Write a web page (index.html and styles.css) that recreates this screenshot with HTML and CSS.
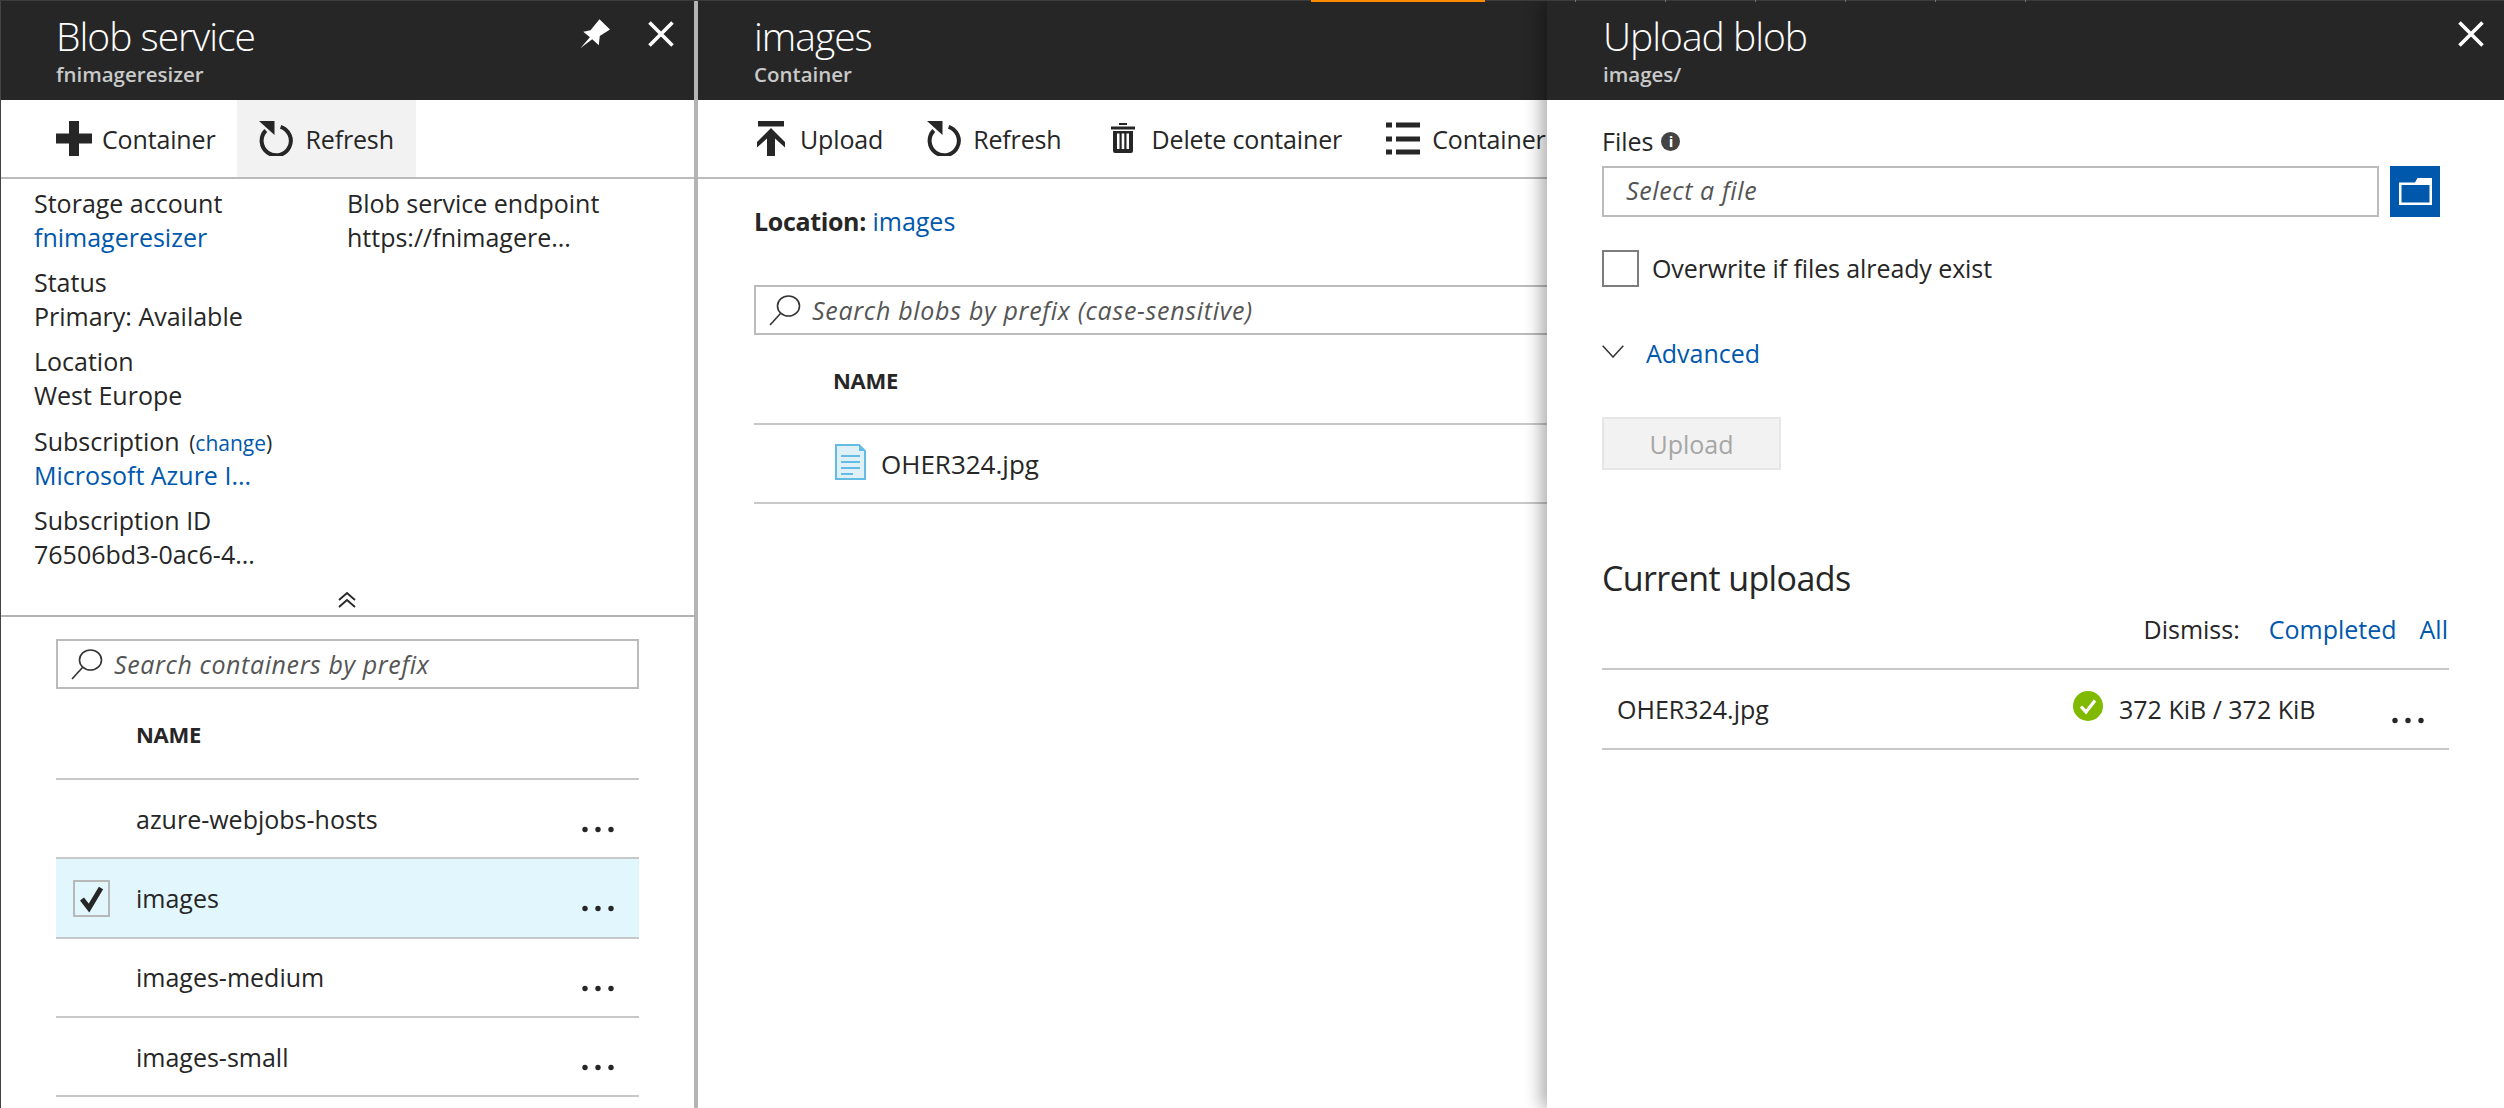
FILE: index.html
```html
<!DOCTYPE html>
<html lang="en">
<head>
<meta charset="utf-8">
<title>Upload blob</title>
<link rel="stylesheet" href="styles.css">
</head>
<body>
<svg class="defs" width="0" height="0">
  <defs>
    <symbol id="refresh" viewBox="0 0 34 35"><path d="M21.6 5.8A14.6 14.6 0 1 1 6.8 9.5" fill="none" stroke="#262626" stroke-width="4"/><path d="M0 0H15.5V14Z" fill="#262626"/></symbol>
    <symbol id="search" viewBox="0 0 32 31"><ellipse cx="19.5" cy="11" rx="11" ry="10" fill="none" stroke="#333" stroke-width="1.6"/><path d="M11.5 18.5L1 30" stroke="#333" stroke-width="1.6" fill="none"/></symbol>
    <symbol id="dots" viewBox="0 0 32 7"><circle cx="3" cy="3.5" r="2.7" fill="#262626"/><circle cx="16" cy="3.5" r="2.7" fill="#262626"/><circle cx="29" cy="3.5" r="2.7" fill="#262626"/></symbol>
  </defs>
</svg>
<div class="topline"><span class="orange"></span><span class="ticks"><i></i><i></i><i></i><i></i><i></i><i></i></span></div>
<main class="desk">

  <section class="blade blade-service">
    <header class="head">
      <div class="head-text">
        <h1>Blob service</h1>
        <p>fnimageresizer</p>
      </div>
      <svg class="pin" viewBox="90 27 91 90"><path d="M91 115L120 82L100 65L122 61L149 27L181 58L150 78L147 106L127 88Z" fill="#fff"/></svg>
      <svg class="close" viewBox="0 0 26 26"><path d="M1.5 1.5L24.5 24.5M24.5 1.5L1.5 24.5" stroke="#fff" stroke-width="3.6" fill="none"/></svg>
    </header>
    <nav class="toolbar toolbar-service">
      <a class="tool tool-first"><svg class="ico-plus" viewBox="0 0 36 35"><path d="M13 0H23V12.5H36V22.5H23V35H13V22.5H0V12.5H13Z" fill="#262626"/></svg>Container</a>
      <a class="tool tool-hover"><svg class="ico-refresh"><use href="#refresh"/></svg>Refresh</a>
    </nav>
    <div class="essentials">
      <div class="ess-col">
        <div class="ess-item"><div>Storage account</div><a class="link">fnimageresizer</a></div>
        <div class="ess-item"><div>Status</div><div>Primary: Available</div></div>
        <div class="ess-item"><div>Location</div><div>West Europe</div></div>
        <div class="ess-item"><div>Subscription <span class="change">(<a class="link">change</a>)</span></div><a class="link">Microsoft Azure I...</a></div>
        <div class="ess-item"><div>Subscription ID</div><div>76506bd3-0ac6-4...</div></div>
      </div>
      <div class="ess-col">
        <div class="ess-item"><div>Blob service endpoint</div><div>https://fnimagere...</div></div>
      </div>
      <svg class="collapse" viewBox="0 0 18 16"><path d="M1 8L9 1L17 8M1 15L9 8L17 15" fill="none" stroke="#262626" stroke-width="1.8"/></svg>
    </div>
    <div class="list-area">
      <div class="searchbox"><svg class="ico-search"><use href="#search"/></svg><span>Search containers by prefix</span></div>
      <div class="col-head">NAME</div>
      <div class="row"><span class="name">azure-webjobs-hosts</span><svg class="dots"><use href="#dots"/></svg></div>
      <div class="row row-selected">
        <span class="check"><svg viewBox="0 0 26 28"><path d="M3 14L10 23L22 3" fill="none" stroke="#262626" stroke-width="5"/></svg></span>
        <span class="name">images</span><svg class="dots"><use href="#dots"/></svg>
      </div>
      <div class="row"><span class="name">images-medium</span><svg class="dots"><use href="#dots"/></svg></div>
      <div class="row"><span class="name">images-small</span><svg class="dots"><use href="#dots"/></svg></div>
    </div>
  </section>

  <section class="blade blade-container">
    <header class="head">
      <div class="head-text">
        <h1>images</h1>
        <p>Container</p>
      </div>
    </header>
    <nav class="toolbar toolbar-container">
      <a class="tool"><svg class="ico-upload" viewBox="0 0 28 35"><path d="M1 0H27V5.5H1ZM14 7L28 21V26.500L18 17.500V35H10V17.500L0 26.500V21Z" fill="#262626"/></svg>Upload</a>
      <a class="tool"><svg class="ico-refresh"><use href="#refresh"/></svg>Refresh</a>
      <a class="tool"><svg class="ico-trash" viewBox="-5 0 34 31"><path d="M8 0H16V2H8ZM0 3.500H24V6.500H0ZM2 8H22V28A2 2 0 0 1 20 30H4A2 2 0 0 1 2 28ZM6 10.500V26H8.500V10.500ZM10.700 10.500V26H13.300V10.500ZM15.500 10.500V26H18V10.500Z" fill-rule="evenodd" fill="#262626"/></svg>Delete container</a>
      <a class="tool"><svg class="ico-list" viewBox="0 0 34 33"><path d="M0 3H6M10 3H34M0 17H6M10 17H34M0 30H6M10 30H34" stroke="#262626" stroke-width="5" fill="none"/></svg>Container</a>
    </nav>
    <div class="container-body">
      <p class="location"><b>Location:</b> <a class="link">images</a></p>
      <div class="searchbox searchbox-wide"><svg class="ico-search"><use href="#search"/></svg><span>Search blobs by prefix (case-sensitive)</span></div>
      <div class="col-head col-head-blob">NAME</div>
      <div class="row row-blob">
        <svg class="ico-file" viewBox="0 0 31 36"><path d="M1 1H24L30 7V35H1Z" fill="#dff0f9" stroke="#62bce3" stroke-width="2"/><path d="M24 1V7H30Z" fill="#62bce3"/><path d="M6 12H25M6 18H25M6 24H25M6 30H18" stroke="#62bce3" stroke-width="2"/></svg>
        <span class="name">OHER324.jpg</span>
      </div>
    </div>
  </section>

  <section class="blade blade-upload">
    <header class="head">
      <div class="head-text">
        <h1>Upload blob</h1>
        <p>images/</p>
      </div>
      <svg class="close" viewBox="0 0 26 26"><path d="M1.500 1.500L24.500 24.500M24.500 1.500L1.500 24.500" stroke="#fff" stroke-width="3.600" fill="none"/></svg>
    </header>
    <div class="upload-body">
      <div class="files-label">Files <span class="info">i</span></div>
      <div class="file-row">
        <div class="file-input">Select a file</div>
        <div class="file-btn"><svg viewBox="0 0 33 27"><path d="M0 4.500H16L18.500 0H33V27H0ZM2.500 7V24.500H30.500V7Z" fill="#fff" fill-rule="evenodd"/></svg></div>
      </div>
      <label class="overwrite"><span class="box"></span><span class="overwrite-text">Overwrite if files already exist</span></label>
      <div class="advanced"><svg viewBox="0 0 22 13"><path d="M.7.7L11 12L21.300.7" fill="none" stroke="#333" stroke-width="1.500"/></svg><a class="link">Advanced</a></div>
      <div class="upload-btn">Upload</div>
      <h2>Current uploads</h2>
      <div class="dismiss"><span>Dismiss:</span><a class="link">Completed</a><a class="link">All</a></div>
      <div class="upload-row">
        <span class="up-name">OHER324.jpg</span>
        <svg class="ok" viewBox="0 0 30 30"><circle cx="15" cy="15" r="15" fill="#7fba00"/><path d="M8 15.500L13 21L22 9.500" fill="none" stroke="#fff" stroke-width="3.200"/></svg>
        <span class="up-size">372 KiB / 372 KiB</span>
        <svg class="dots"><use href="#dots"/></svg>
      </div>
    </div>
  </section>

</main>
</body>
</html>
```

FILE: styles.css
```css
* { box-sizing: border-box; }
html, body { margin: 0; height: 100%; }
body {
  width: 2504px;
  height: 1108px;
  overflow: hidden;
  position: relative;
  background: #fff;
  color: #262626;
  font-family: "Open Sans", "Noto Sans", sans-serif;
  font-size: 25px;
  letter-spacing: 0;
  line-height: 34px;
}
.defs { position: absolute; }
a { color: inherit; text-decoration: none; }
.link { color: #0058ad; }

.topline {
  position: absolute;
  z-index: 5;
  left: 0; top: 0;
  width: 100%;
  height: 1px;
  background: #3c3c3c;
}
.orange { position: absolute; left: 1311px; top: 0; width: 174px; height: 2px; background: #ff8c00; }
.ticks { position: absolute; left: 1575px; top: 0; display: flex; gap: 89px; }
.ticks i { width: 1px; height: 2px; background: #777; }

.desk { display: flex; height: 1108px; }
.blade { height: 100%; overflow: hidden; background: #fff; }
.blade-service { width: 698px; border-left: 1px solid #444; border-right: 4px solid #b4b4b4; }
.blade-container { width: 849px; }
.blade-upload { flex: 1; position: relative; z-index: 2; box-shadow: -6px 0 16px rgba(0, 0, 0, .32); }

.head {
  height: 100px;
  background: #262626;
  color: #fff;
  display: flex;
  align-items: flex-start;
  padding-left: 56px;
}
.blade-service .head { padding-left: 55px; }
.head-text { flex: 1; }
.head h1 {
  margin: 11px 0 0;
  font-size: 39px;
  font-weight: 300;
  letter-spacing: -1px;
  line-height: 50px;
}
.head p {
  margin: 0;
  font-size: 20.500px;
  font-weight: 600;
  letter-spacing: 0;
  line-height: 26px;
  color: #c9c9c9;
}
.pin { width: 30px; height: 30px; margin-top: 19px; margin-right: 38px; }
.close { width: 26px; height: 26px; margin-top: 21px; margin-right: 20px; flex: none; }

.toolbar { display: flex; height: 79px; border-bottom: 2px solid #bbb; }
.toolbar-container { padding-left: 37px; width: 960px; }
.tool { display: flex; align-items: center; gap: 12px; padding: 0 22px; height: 77px; white-space: nowrap; letter-spacing: -0.15px; }
.tool-first { padding-left: 55px; gap: 10px; }
.tool-hover { background: #f2f2f2; }
.ico-plus { width: 36px; height: 35px; }
.ico-refresh { width: 34px; height: 35px; }
.ico-upload { width: 28px; height: 35px; margin-right: 3px; }
.ico-trash { width: 34px; height: 31px; }
.ico-list { width: 34px; height: 33px; }

.essentials {
  position: relative;
  height: 438px;
  padding: 7px 0 0 33px;
  border-bottom: 2px solid #b4b4b4;
  display: grid;
  grid-template-columns: 313px 1fr;
  align-content: start;
}
.ess-item { height: 79.200px; white-space: nowrap; }
.ess-item > a { display: block; }
.change { font-size: 21px; margin-left: 3px; line-height: 1; }
.collapse { position: absolute; left: 337px; bottom: 7px; width: 18px; height: 16px; }

.list-area { padding: 22px 55px 0 55px; }
.searchbox {
  height: 50px;
  border: 2px solid #bbb;
  display: flex;
  align-items: center;
  padding-left: 13px;
  gap: 11px;
  font-style: italic;
  letter-spacing: 0.6px;
  color: #555;
}
.ico-search { width: 32px; height: 31px; flex: none; }
.col-head {
  height: 91px;
  padding: 28px 0 0 80px;
  font-size: 22px;
  font-weight: 700;
  border-bottom: 2px solid #c8c8c8;
  letter-spacing: -0.3px;
}
.row {
  position: relative;
  height: 79.300px;
  border-bottom: 2px solid #c8c8c8;
  display: flex;
  align-items: center;
  padding-left: 80px;
}
.row-selected { background: #e2f6fe; }
.name { flex: 1; }
.dots { width: 32px; height: 7px; margin: 22px 25px 0 0; flex: none; }
.check {
  position: absolute;
  left: 17px; top: 21px;
  width: 37px; height: 37px;
  border: 2px solid #b8b8b8;
  display: flex;
  align-items: center;
  justify-content: center;
}
.check svg { width: 26px; height: 28px; }

.container-body { padding: 25px 0 0 56px; width: 960px; }
.location { margin: 0 0 47px; }
.location b { font-weight: 700; letter-spacing: -0.35px; }
.searchbox-wide { height: 50px; letter-spacing: 0.7px; }
.col-head-blob { height: 90px; padding: 28px 0 0 79px; }
.row-blob { height: 79px; padding-left: 81px; gap: 15px; font-size: 26px; font-weight: 500; }
.ico-file { width: 31px; height: 36px; margin-top: -3px; }

.upload-body { padding: 24px 55px 0 55px; }
.files-label { display: flex; align-items: center; gap: 8px; height: 34px; }
.info {
  width: 19px; height: 19px;
  border-radius: 50%;
  background: #444;
  color: #fff;
  font-size: 15px;
  font-weight: 700;
  line-height: 19px;
  text-align: center;
  letter-spacing: 0;
}
.file-row { display: flex; gap: 11px; margin-top: 8px; }
.file-input {
  width: 777px;
  height: 51px;
  border: 2px solid #bbb;
  padding: 5px 22px;
  font-style: italic;
  letter-spacing: 0.6px;
  color: #555;
}
.file-btn {
  width: 50px;
  height: 51px;
  background: #0058ad;
  display: flex;
  align-items: center;
  justify-content: center;
}
.file-btn svg { width: 33px; height: 27px; }
.overwrite { display: flex; align-items: center; gap: 13px; margin-top: 33px; height: 37px; }
.overwrite-text { margin-top: -2px; letter-spacing: -0.1px; }
.box { width: 37px; height: 37px; border: 2px solid #7d7d7d; }
.advanced { display: flex; align-items: center; gap: 22px; margin-top: 49px; height: 34px; }
.advanced svg { width: 22px; height: 13px; margin-top: -4px; }
.upload-btn {
  width: 179px;
  height: 53px;
  margin-top: 47px;
  background: #f2f2f2;
  border: 2px solid #e6e6e6;
  color: #a6a6a6;
  text-align: center;
  line-height: 51px;
}
h2 { margin: 83px 0 0; font-size: 34px; font-weight: 400; line-height: 50px; letter-spacing: -0.6px; }
.dismiss { display: flex; justify-content: flex-end; gap: 29px; margin-top: 9px; height: 58px; border-bottom: 2px solid #c8c8c8; padding-right: 1px; }
.dismiss .link + .link { margin-left: -6px; }
.upload-row { display: flex; align-items: center; height: 80px; border-bottom: 2px solid #c8c8c8; padding-left: 15px; position: relative; }
.up-name { width: 456px; }
.ok { width: 30px; height: 30px; margin-top: -6px; }
.up-size { margin-left: 16px; width: 273px; white-space: nowrap; }
.upload-row .dots { margin: 22px 0 0 0; }
```
